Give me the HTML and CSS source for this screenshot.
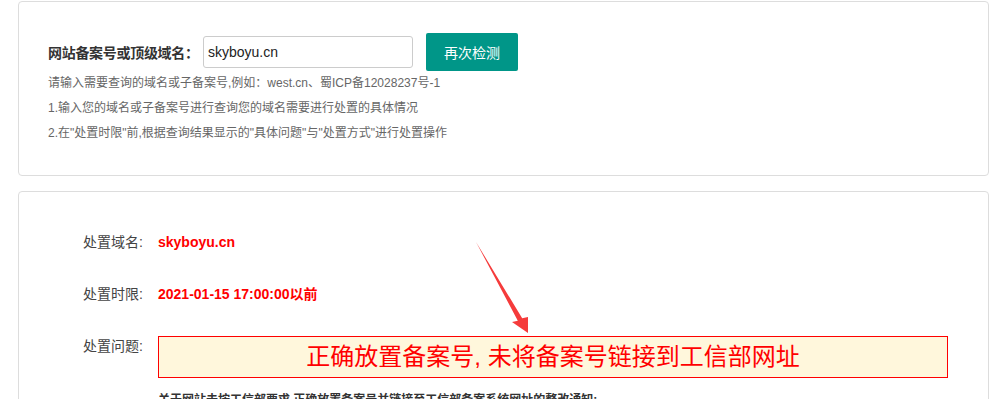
FILE: index.html
```html
<!DOCTYPE html>
<html lang="zh-CN">
<head>
    <meta charset="UTF-8">
    <meta name="viewport" content="width=device-width, initial-scale=1.0">
    <title>备案号处置查询</title>
    <link rel="stylesheet" href="styles.css">
</head>
<body>
    <div class="page">
        <div class="card search-card">
            <form class="search-row">
                <label class="search-label" for="domain">网站备案号或顶级域名：</label>
                <input type="text" id="domain" class="search-input" value="skyboyu.cn" />
                <button type="submit" class="search-btn">再次检测</button>
            </form>
            <p class="tip">请输入需要查询的域名或子备案号,例如：west.cn、蜀ICP备12028237号-1</p>
            <p class="tip">1.输入您的域名或子备案号进行查询您的域名需要进行处置的具体情况</p>
            <p class="tip">2.在"处置时限"前,根据查询结果显示的"具体问题"与"处置方式"进行处置操作</p>
        </div>

        <div class="card result-card">
            <div class="row">
                <span class="row-label">处置域名:</span>
                <span class="row-value">skyboyu.cn</span>
            </div>
            <div class="row">
                <span class="row-label">处置时限:</span>
                <span class="row-value">2021-01-15 17:00:00以前</span>
            </div>
            <div class="row">
                <span class="row-label">处置问题:</span>
                <div class="row-body">
                    <div class="problem-box">正确放置备案号, 未将备案号链接到工信部网址</div>
                    <p class="notice-title">关于网站未按工信部要求,正确放置备案号并链接至工信部备案系统网址的整改通知:</p>
                    <p class="notice-text">根据工信部相关要求，网站首页底部需正确放置备案号，并链接至工信部备案系统网址。</p>
                </div>
            </div>
            <svg class="arrow" width="60" height="100" viewBox="0 0 60 100">
                <polygon points="0,2 46.2,78.3 52,77 52,93 36,82 41.8,80.7" fill="#f53b3b" />
            </svg>
        </div>
    </div>
</body>
</html>
```

FILE: styles.css
```css
body {
    margin: 0;
    background: #fff;
    font-family: "Liberation Sans", "Noto Sans CJK SC", sans-serif;
    color: #333;
}
.page {
    padding: 1px 1px 0 18px;
}
.card {
    background: #fff;
    border: 1px solid #ddd;
    border-radius: 4px;
}
.search-card {
    height: 175px;
    box-sizing: border-box;
    padding: 30px 29px 0;
}
.search-row {
    display: flex;
    align-items: center;
    height: 39px;
}
.search-label {
    flex-shrink: 0;
    width: 155px;
    white-space: nowrap;
    letter-spacing: -0.3px;
    font-size: 14px;
    font-weight: bold;
    color: #333;
}
.search-input {
    width: 210px;
    height: 32px;
    box-sizing: border-box;
    border: 1px solid #ccc;
    border-radius: 3px;
    padding: 0 4px;
    font-size: 14px;
    font-family: "Liberation Sans", sans-serif;
    color: #222;
    margin: 0;
}
.search-btn {
    margin-left: 13px;
    width: 92px;
    height: 38px;
    border: none;
    border-radius: 2px;
    background-color: #009688;
    color: #fff;
    font-size: 14px;
    font-family: "Liberation Sans", "Noto Sans CJK SC", sans-serif;
    cursor: pointer;
}
.tip {
    margin: 0;
    font-size: 12px;
    line-height: 25px;
    color: #666;
}
.result-card {
    position: relative;
    margin-top: 15px;
    padding: 40px 40px 40px 64px;
}
.row {
    display: flex;
    align-items: flex-start;
    margin-bottom: 32px;
    font-size: 14px;
    line-height: 20px;
}
.row-label {
    width: 75px;
    flex-shrink: 0;
    color: #444;
}
.row-value {
    color: #f00;
    font-weight: bold;
}
.row-body {
    flex: 1;
}
.problem-box {
    height: 40px;
    line-height: 40px;
    border: 1px solid #f00;
    background: #fff7dc;
    color: #f00;
    font-size: 24px;
    text-align: center;
}
.notice-title {
    margin: 12px 0 0;
    font-size: 12px;
    font-weight: bold;
    line-height: 20px;
    color: #333;
}
.notice-text {
    margin: 6px 0 0;
    font-size: 12px;
    line-height: 22px;
    color: #666;
}
.arrow {
    position: absolute;
    left: 457px;
    top: 48px;
}
```
